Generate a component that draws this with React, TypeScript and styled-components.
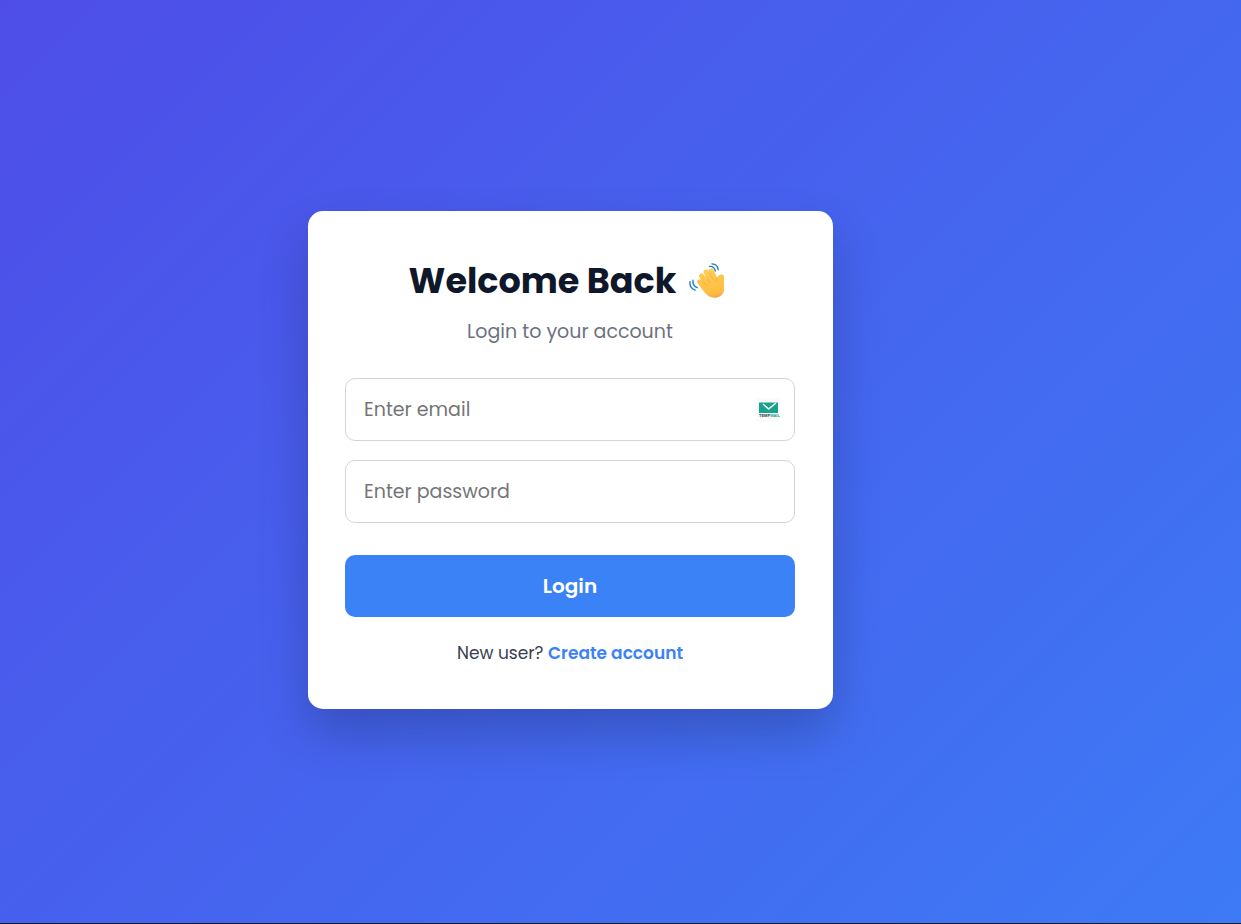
import React from "react";
import styled, { createGlobalStyle } from "styled-components";

const GlobalStyle = createGlobalStyle`
  *, *::before, *::after { box-sizing: border-box; }
  body {
    margin: 0;
    font-family: Poppins, Inter, "Liberation Sans", sans-serif;
    color: #374151;
  }
`;

const Page = styled.main`
  min-height: 100vh;
  display: flex;
  align-items: center;
  justify-content: center;
  padding: 0 100px 3px 0;
  background: linear-gradient(135deg, #4e4de8, #3d7af5);
  border-bottom: 1px solid #111827;
`;

const Card = styled.form`
  width: 100%;
  max-width: 525px;
  padding: 50px 38px 42px 37px;
  border-radius: 15px;
  background: #ffffff;
  box-shadow: 0 25px 50px rgba(0, 0, 0, 0.2);
  text-align: center;
`;

const Title = styled.h1`
  display: flex;
  align-items: center;
  justify-content: center;
  gap: 13px;
  margin: 0;
  padding-right: 7px;
  font-size: 35px;
  line-height: 40px;
  font-weight: 700;
  color: #0f172a;
`;

const Subtitle = styled.p`
  margin: 17px 0 32px;
  font-size: 19px;
  line-height: 28px;
  color: #6b7280;
`;

const Field = styled.div`
  position: relative;
  margin-bottom: 19px;
`;

const Input = styled.input`
  display: block;
  width: 100%;
  height: 63px;
  padding: 0 18px;
  border: 1px solid #d1d5db;
  border-radius: 10px;
  background: #ffffff;
  font-family: inherit;
  font-size: 19px;
  color: #111827;

  &::placeholder {
    color: #757575;
    opacity: 1;
  }
`;

const MailBadge = styled.svg`
  position: absolute;
  top: 20px;
  right: 15px;
`;

const Submit = styled.button`
  display: block;
  width: 100%;
  height: 62px;
  margin: 32px 0 22px;
  border: 0;
  border-radius: 10px;
  background: #3b82f6;
  font-family: inherit;
  font-size: 20px;
  font-weight: 600;
  color: #ffffff;
  cursor: pointer;
`;

const Footer = styled.p`
  margin: 0;
  font-size: 17px;
  line-height: 28px;
`;

const FooterLink = styled.a`
  font-weight: 600;
  color: #3b82f6;
  text-decoration: none;
`;

const WavingHand = () => (
  <svg width="35" height="36" viewBox="0 0 35 36" role="img" aria-label="Waving hand">
    <defs>
      <linearGradient id="skin" gradientUnits="userSpaceOnUse" x1="17" y1="6" x2="22" y2="37">
        <stop offset="0" stopColor="#ffcd52" />
        <stop offset="0.8" stopColor="#ffbd42" />
        <stop offset="1" stopColor="#f3924a" />
      </linearGradient>
    </defs>
    <g fill="none" stroke="#1f7fc4" strokeWidth="1.4" strokeLinecap="round">
      <path d="M20.500 3.400c2.800-.3 5 1.300 5.800 4.600" />
      <path d="M23 .900c3.400.100 5.800 2.300 6.200 5.800" />
      <path d="M4 17.300c-.5 3.300 1.100 6 4.200 7.400" />
      <path d="M1 18.800c-.4 3.900 1.600 7 5.200 8.300" />
    </g>
    <g fill="none" stroke="url(#skin)" strokeWidth="5" strokeLinecap="round">
      <path d="M10.600 18.800l8 8" />
      <path d="M12.600 13l8 12" />
      <path d="M17 8.900l7 13" />
      <path d="M22.200 7.900l5.300 11.500" />
    </g>
    <path
      d="M12 23.500L17 16l9 1.500 1.900-1.800c.4-2.400 2.200-4.200 4.400-4.200 1.800 0 2.700.8 2.700 2.500v14c-1.300 3.900-4.300 6.300-8.200 6.700-4.600.4-8-1.500-11-4.900L9 20.700z"
      fill="url(#skin)"
    />
    <g fill="none" stroke="#e69a35" strokeWidth=".7" strokeLinecap="round" opacity=".7">
      <path d="M13.900 18.600l3.800 4" />
      <path d="M16.500 13.200l4.300 6.700" />
      <path d="M20.600 10.200l3.800 7" />
      <path d="M28.200 15c.1 1.900-.8 3.400-2.500 4.700" />
    </g>
  </svg>
);

const MailIcon = () => (
  <MailBadge width="24" height="24" viewBox="0 0 24 24" aria-hidden="true">
    <rect width="24" height="24" rx="3" fill="#fbfbfb" />
    <path d="M3 4.500h19v10.500H3z" fill="#18a18b" />
    <path d="M7 6l5.500 5L20 5" fill="none" stroke="#ffffff" strokeWidth="1.500" />
    <text x="3" y="19" fontSize="4" fontWeight="800" fontFamily="Liberation Sans, sans-serif" fill="#20384a">
      TEMP<tspan fill="#18a18b">MAIL</tspan>
    </text>
  </MailBadge>
);

export default function App() {
  return (
    <>
      <GlobalStyle />
      <Page>
        <Card onSubmit={(event: React.FormEvent) => event.preventDefault()}>
          <Title>
            Welcome Back
            <WavingHand />
          </Title>
          <Subtitle>Login to your account</Subtitle>
          <Field>
            <Input type="email" placeholder="Enter email" aria-label="Email" />
            <MailIcon />
          </Field>
          <Field>
            <Input type="password" placeholder="Enter password" aria-label="Password" />
          </Field>
          <Submit type="submit">Login</Submit>
          <Footer>
            New user? <FooterLink href="#register">Create account</FooterLink>
          </Footer>
        </Card>
      </Page>
    </>
  );
}
